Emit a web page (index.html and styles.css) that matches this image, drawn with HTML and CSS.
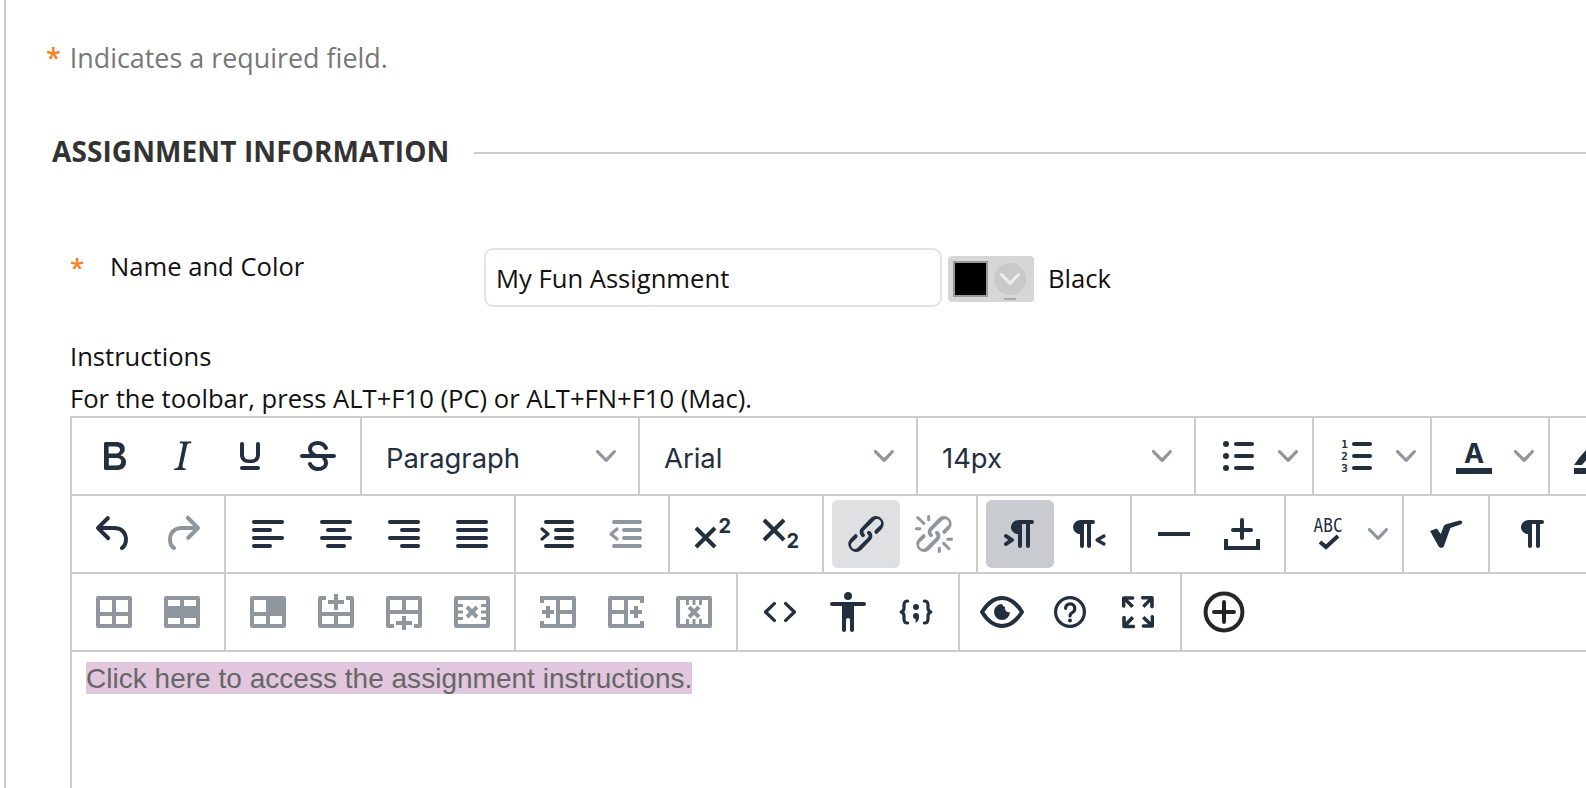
FILE: index.html
```html
<!DOCTYPE html>
<html>
<head>
    <meta http-equiv="Content-Type" content="text/html; charset=utf-8" />
    <title>Create Assignment</title>
    <link rel="stylesheet" href="styles.css">
</head>
<body>
<div class="page">
    <p class="note"><span class="star star-note">*</span> Indicates a required field.</p>

    <div class="sec-head"><h2>ASSIGNMENT INFORMATION</h2></div>

    <div class="name-row">
        <span class="star star-name">*</span>
        <label class="name-label">Name and Color</label>
        <div class="name-input">My Fun Assignment</div>
        <div class="swatch">
            <span class="swatch-box"></span>
            <span class="swatch-arrow">
                <svg viewBox="0 0 10 10" width="20" height="20"><path d="M8.7 2.2c.3-.3.8-.3 1 0 .4.4.4.9 0 1.2L5.7 7.8c-.3.3-.9.3-1.2 0L.2 3.4a.8.8 0 0 1 0-1.2c.3-.3.8-.3 1.1 0L5 6l3.7-3.8z"/></svg>
            </span>
            <span class="swatch-mark"></span>
        </div>
        <span class="color-name">Black</span>
    </div>

    <div class="instr">Instructions</div>
    <div class="help">For the toolbar, press ALT+F10 (PC) or ALT+FN+F10 (Mac).</div>

    <div class="editor">
        <!-- row 1 -->
        <div class="tb-row">
            <div class="group">
                <span class="btn"><svg class="ic" viewBox="0 0 24 24"><path d="M7.8 19c-.3 0-.5 0-.6-.2l-.2-.5V5.7c0-.2 0-.4.2-.5l.6-.2h5c1.5 0 2.7.3 3.5 1 .7.6 1.1 1.4 1.1 2.5a3 3 0 0 1-.6 1.9c-.4.6-1 1-1.6 1.2.4.1.9.3 1.3.6s.8.7 1 1.2c.4.4.5 1 .5 1.6 0 1.3-.4 2.3-1.3 3-.8.7-2.1 1-3.8 1H7.8zm5-8.3c.6 0 1.2-.1 1.6-.5.4-.3.6-.7.6-1.3 0-1.1-.8-1.7-2.3-1.7H9.3v3.5h3.4zm.5 6c.7 0 1.3-.1 1.7-.4.4-.4.6-.9.6-1.5s-.2-1-.7-1.4c-.4-.3-1-.4-2-.4H9.4v3.8h4z"/></svg></span>
                <span class="btn"><svg class="ic" viewBox="0 0 24 24"><path d="M16.7 4.7l-.1.9h-.3c-.6 0-1 0-1.4.3-.3.3-.4.6-.5 1.1l-2.1 9.8v.6c0 .5.4.8 1.4.8h.2l-.2.8H8l.2-.8h.2c1.1 0 1.8-.5 2-1.5l2-9.8.1-.5c0-.6-.4-.8-1.4-.8h-.3l.2-.9h5.8z"/></svg></span>
                <span class="btn"><svg class="ic" viewBox="0 0 24 24"><path d="M16 5c.6 0 1 .4 1 1v5.5a4 4 0 0 1-.4 1.8l-.6 1c-.7.6-1.7 1.2-3 1.2h-2c-1.3 0-2.3-.6-3-1.2l-.6-1a4 4 0 0 1-.4-1.8V6c0-.6.4-1 1-1s1 .4 1 1v5.5c0 .3 0 .6.2 1l.4.6c.3.3.8.6 1.4.6h2c.6 0 1.1-.3 1.4-.6l.4-.6c.2-.4.2-.7.2-1V6c0-.6.4-1 1-1zM8 17h8c.6 0 1 .4 1 1s-.4 1-1 1H8a1 1 0 0 1 0-2z"/></svg></span>
                <span class="btn"><svg class="ic" viewBox="0 0 24 24"><path class="ln" d="M4 12h16M16 8c-.8-1.6-2.200-2.500-4-2.500-2.300 0-4 1.200-4 3 0 1.500 1 2.500 3 3.500M8 16c.8 1.600 2.200 2.500 4 2.500 2.300 0 4-1.200 4-3 0-1-.4-1.800-1-2.500"/></svg></span>
            </div>
            <div class="select select-text"><span>Paragraph</span><svg class="chev" viewBox="0 0 10 10"><path d="M8.7 2.2c.3-.3.8-.3 1 0 .4.4.4.9 0 1.2L5.7 7.8c-.3.3-.9.3-1.2 0L.2 3.400a.8.8 0 0 1 0-1.200c.3-.3.8-.3 1.100 0L5 6l3.700-3.800z"/></svg></div>
            <div class="select select-text"><span>Arial</span><svg class="chev" viewBox="0 0 10 10"><path d="M8.7 2.2c.3-.3.8-.3 1 0 .4.4.4.9 0 1.2L5.7 7.8c-.3.3-.9.3-1.2 0L.2 3.400a.8.8 0 0 1 0-1.200c.3-.3.8-.3 1.100 0L5 6l3.700-3.800z"/></svg></div>
            <div class="select select-text"><span>14px</span><svg class="chev" viewBox="0 0 10 10"><path d="M8.7 2.2c.3-.3.8-.3 1 0 .4.4.4.9 0 1.2L5.7 7.8c-.3.3-.9.3-1.2 0L.2 3.400a.8.8 0 0 1 0-1.200c.3-.3.8-.3 1.100 0L5 6l3.700-3.800z"/></svg></div>
            <div class="select split">
                <svg class="ic" viewBox="0 0 24 24"><path class="ln" d="M11 6h8M11 12h8M11 18h8"/><circle cx="6" cy="6" r="1.500"/><circle cx="6" cy="12" r="1.500"/><circle cx="6" cy="18" r="1.500"/></svg>
                <svg class="chev" viewBox="0 0 10 10"><path d="M8.7 2.2c.3-.3.8-.3 1 0 .4.4.4.9 0 1.2L5.700 7.800c-.3.3-.9.3-1.200 0L.2 3.400a.8.8 0 0 1 0-1.200c.3-.3.8-.3 1.100 0L5 6l3.700-3.800z"/></svg>
            </div>
            <div class="select split">
                <svg class="ic" viewBox="0 0 24 24"><path class="ln" d="M11 6h8M11 12h8M11 18h8"/><text class="num" x="4.600" y="8.200">1</text><text class="num" x="4.600" y="14.200">2</text><text class="num" x="4.600" y="20.200">3</text></svg>
                <svg class="chev" viewBox="0 0 10 10"><path d="M8.7 2.2c.3-.3.8-.3 1 0 .4.4.4.9 0 1.2L5.700 7.800c-.3.3-.9.3-1.200 0L.2 3.400a.8.8 0 0 1 0-1.200c.3-.3.8-.3 1.100 0L5 6l3.700-3.800z"/></svg>
            </div>
            <div class="select split">
                <svg class="ic" viewBox="0 0 24 24"><text class="big-a" x="12" y="15.700">A</text><path d="M3 18h18v3H3z"/></svg>
                <svg class="chev" viewBox="0 0 10 10"><path d="M8.7 2.2c.3-.3.8-.3 1 0 .4.4.4.9 0 1.2L5.700 7.800c-.3.3-.9.3-1.200 0L.2 3.400a.8.8 0 0 1 0-1.200c.3-.3.8-.3 1.100 0L5 6l3.700-3.800z"/></svg>
            </div>
            <div class="select split">
                <svg class="ic" viewBox="0 0 24 24"><path d="M3 18h18v3H3zM3 16.500L5.500 13 9 9l.1 5L7 16.500z"/></svg>
            </div>
        </div>
        <!-- row 2 -->
        <div class="tb-row">
            <div class="group">
                <span class="btn"><svg class="ic" viewBox="0 0 24 24"><path d="M6.400 8H12c3.700 0 6.200 2 6.800 5.100.6 2.700-.4 5.600-2.300 6.800a1 1 0 0 1-1-1.800c1.100-.7 1.800-2.700 1.400-4.600-.5-2.100-2.100-3.500-4.900-3.500H6.400l3.300 3.300a1 1 0 1 1-1.400 1.400l-5-5a1 1 0 0 1 0-1.400l5-5a1 1 0 0 1 1.400 1.400L6.400 8z"/></svg></span>
                <span class="btn off"><svg class="ic" viewBox="0 0 24 24"><path d="M17.600 10H12c-2.800 0-4.400 1.400-4.900 3.500-.4 2 .3 3.900 1.400 4.600a1 1 0 1 1-1 1.800c-2-1.200-2.900-4.100-2.300-6.800.6-3 3-5.100 6.800-5.100h5.600l-3.300-3.300a1 1 0 1 1 1.400-1.400l5 5a1 1 0 0 1 0 1.400l-5 5a1 1 0 0 1-1.400-1.400l3.300-3.300z"/></svg></span>
            </div>
            <div class="group">
                <span class="btn"><svg class="ic" viewBox="0 0 24 24"><path class="ln" d="M5 6h14M5 10h8M5 14h14M5 18h8"/></svg></span>
                <span class="btn"><svg class="ic" viewBox="0 0 24 24"><path class="ln" d="M5 6h14M8 10h8M5 14h14M8 18h8"/></svg></span>
                <span class="btn"><svg class="ic" viewBox="0 0 24 24"><path class="ln" d="M5 6h14M11 10h8M5 14h14M11 18h8"/></svg></span>
                <span class="btn"><svg class="ic" viewBox="0 0 24 24"><path class="ln" d="M5 6h14M5 10h14M5 14h14M5 18h14"/></svg></span>
            </div>
            <div class="group">
                <span class="btn"><svg class="ic" viewBox="0 0 24 24"><path class="ln" d="M6 6h13M11 10h8M11 14h8M6 18h13"/><path class="ln thin" d="M4 9.500L7 12l-3 2.500"/></svg></span>
                <span class="btn off"><svg class="ic" viewBox="0 0 24 24"><path class="ln" d="M6 6h13M11 10h8M11 14h8M6 18h13"/><path class="ln thin" d="M7.500 9.500L4.500 12l3 2.500"/></svg></span>
            </div>
            <div class="group">
                <span class="btn"><svg class="ic" viewBox="0 0 24 24"><path class="ln sq" d="M4 9l9.500 9.500M13.500 9L4 18.500"/><text class="idx" x="15.300" y="11.700">2</text></svg></span>
                <span class="btn"><svg class="ic" viewBox="0 0 24 24"><path class="ln sq" d="M4 5l10 10M14 5L4 15"/><text class="idx" x="15.300" y="19">2</text></svg></span>
            </div>
            <div class="group">
                <span class="btn on-light"><svg class="ic" viewBox="0 0 24 24"><path d="M6.200 12.300a1 1 0 0 1 1.400 1.400l-2 2a2 2 0 1 0 2.600 2.800l4.800-4.800a1 1 0 0 0 0-1.400 1 1 0 1 1 1.400-1.300 2.900 2.900 0 0 1 0 4L9.600 20a3.900 3.900 0 0 1-5.500-5.500l2-2zm11.600-.6a1 1 0 0 1-1.400-1.400l2-2a2 2 0 1 0-2.600-2.800L11 10.300a1 1 0 0 0 0 1.400A1 1 0 1 1 9.600 13a2.900 2.900 0 0 1 0-4L14.400 4a3.900 3.900 0 0 1 5.500 5.500l-2 2z"/></svg></span>
                <span class="btn off"><svg class="ic" viewBox="0 0 24 24"><path d="M6.200 12.300a1 1 0 0 1 1.400 1.400l-2.100 2a2 2 0 1 0 2.700 2.800l4.800-4.800a1 1 0 0 0 0-1.400 1 1 0 1 1 1.400-1.300 2.900 2.900 0 0 1 0 4L9.600 20a3.900 3.900 0 0 1-5.500-5.500l2-2zm11.600-.6a1 1 0 0 1-1.400-1.400l2.100-2a2 2 0 1 0-2.700-2.800L11 10.300a1 1 0 0 0 0 1.400A1 1 0 1 1 9.600 13a2.900 2.900 0 0 1 0-4L14.400 4a3.900 3.900 0 0 1 5.500 5.500l-2 2zM7.600 6.300a.8.8 0 0 1-1 1.100L3.300 4.200a.7.7 0 1 1 1-1l3.200 3.100zM5.100 8.600a.8.8 0 0 1 0 1.500H3a.8.8 0 0 1 0-1.500H5zm5-3.500a.8.8 0 0 1-1.500 0V3a.8.8 0 0 1 1.500 0v2zm6 11.800a.8.8 0 0 1 1-1l3.200 3.200a.8.8 0 0 1-1 1L16 17zm-2.200 2a.8.8 0 0 1 1.500 0V21a.8.8 0 0 1-1.500 0V19zm5-3.500a.7.7 0 1 1 0-1.500H21a.8.8 0 0 1 0 1.500H19z"/></svg></span>
            </div>
            <div class="group">
                <span class="btn on-dark"><svg class="ic" viewBox="0 0 24 24"><path d="M11 5h7a1 1 0 0 1 0 2h-1v11a1 1 0 0 1-2 0V7h-2v11a1 1 0 0 1-2 0v-6c-.5 0-1 0-1.400-.3A3.400 3.400 0 0 1 7.800 10a3.300 3.300 0 0 1 0-2.800 3.400 3.400 0 0 1 1.800-1.800L11 5zM4.400 16.200L6.200 15l-1.800-1.200a1 1 0 0 1 1.200-1.600l3 2a1 1 0 0 1 0 1.600l-3 2a1 1 0 1 1-1.200-1.600z"/></svg></span>
                <span class="btn"><svg class="ic" viewBox="0 0 24 24"><path d="M8 5h6.500a1 1 0 0 1 0 2h-1v11a1 1 0 0 1-2 0V7H10v11a1 1 0 0 1-2 0v-6c-.5 0-1 0-1.400-.3A3.400 3.400 0 0 1 4.800 10a3.300 3.300 0 0 1 0-2.800 3.400 3.400 0 0 1 1.800-1.800L8 5z"/><path class="ln thin" d="M20 13l-3.500 2 3.500 2"/></svg></span>
            </div>
            <div class="group">
                <span class="btn"><svg class="ic" viewBox="0 0 24 24"><path d="M4 11h16v2H4z"/></svg></span>
                <span class="btn"><svg class="ic" viewBox="0 0 24 24"><path class="ln" d="M12 5v9M7.500 10h9"/><path class="ln sq" d="M4 14.500V19h16v-4.500"/></svg></span>
            </div>
            <div class="select split">
                <svg class="ic" viewBox="0 0 24 24"><text class="abc" x="4.800" y="10.800" textLength="14.500" lengthAdjust="spacingAndGlyphs">ABC</text><path class="ln sq" d="M8 16l3 2.500 6-5.500"/></svg>
                <svg class="chev" viewBox="0 0 10 10"><path d="M8.7 2.2c.3-.3.8-.3 1 0 .4.4.4.9 0 1.2L5.700 7.800c-.3.3-.9.3-1.200 0L.2 3.400a.8.8 0 0 1 0-1.200c.3-.3.8-.3 1.100 0L5 6l3.700-3.800z"/></svg>
            </div>
            <div class="group">
                <span class="btn"><svg class="ic" viewBox="0 0 24 24"><path d="M4 10.500l3.400-1.300 2 2.800 1.300-3.500c.4-1 .8-1.300 1.800-1.500l6.300-1.700c1.400-.2 1.800 1.600.4 2L14.200 9 11 18c-.5 1.200-2.200 1.200-2.800 0z"/></svg></span>
            </div>
            <div class="group">
                <span class="btn"><svg class="ic" viewBox="0 0 24 24"><path d="M10 5h7a1 1 0 0 1 0 2h-1v11a1 1 0 0 1-2 0V7h-2v11a1 1 0 0 1-2 0v-6c-.5 0-1 0-1.400-.3A3.400 3.400 0 0 1 6.800 10a3.300 3.300 0 0 1 0-2.800 3.400 3.400 0 0 1 1.800-1.800L10 5z"/></svg></span>
            </div>
        </div>
        <!-- row 3 -->
        <div class="tb-row">
            <div class="group">
                <span class="btn off"><svg class="ic" viewBox="0 0 24 24"><path fill-rule="evenodd" d="M4 4h16a1 1 0 0 1 1 1v14a1 1 0 0 1-1 1H4a1 1 0 0 1-1-1V5a1 1 0 0 1 1-1zm1 2v6h6V6zm8 0v6h6V6zm-8 8v4h6v-4zm8 0v4h6v-4z"/></svg></span>
                <span class="btn off"><svg class="ic" viewBox="0 0 24 24"><path fill-rule="evenodd" d="M4 4h16a1 1 0 0 1 1 1v14a1 1 0 0 1-1 1H4a1 1 0 0 1-1-1V5a1 1 0 0 1 1-1zm1 2v3h6V6zm8 0v3h6V6zm-8 9v3h6v-3zm8 0v3h6v-3z"/></svg></span>
            </div>
            <div class="group">
                <span class="btn off"><svg class="ic" viewBox="0 0 24 24"><path fill-rule="evenodd" d="M4 4h16a1 1 0 0 1 1 1v14a1 1 0 0 1-1 1H4a1 1 0 0 1-1-1V5a1 1 0 0 1 1-1zm1 2v6h6V6zm0 8v4h6v-4zm8 0v4h6v-4z"/></svg></span>
                <span class="btn off"><svg class="ic" viewBox="0 0 24 24"><path fill-rule="evenodd" d="M3 5a1 1 0 0 1 1-1h3v2H5v6h14V6h-2V4h3a1 1 0 0 1 1 1v14a1 1 0 0 1-1 1H4a1 1 0 0 1-1-1zm2 9v4h6v-4zm8 0v4h6v-4z"/><path d="M11 3h2v3h3v2h-3v3h-2V8H8V6h3z"/></svg></span>
                <span class="btn off"><svg class="ic" viewBox="0 0 24 24"><path fill-rule="evenodd" d="M4 4h16a1 1 0 0 1 1 1v14a1 1 0 0 1-1 1h-3v-2h2v-5H5v5h2v2H4a1 1 0 0 1-1-1V5a1 1 0 0 1 1-1zm1 2v5h6V6zm8 0v5h6V6z"/><path d="M11 14h2v2.500h3v2h-3V21h-2v-2.500H8v-2h3z"/></svg></span>
                <span class="btn off"><svg class="ic" viewBox="0 0 24 24"><path fill-rule="evenodd" d="M4 4h16a1 1 0 0 1 1 1v14a1 1 0 0 1-1 1H4a1 1 0 0 1-1-1V5a1 1 0 0 1 1-1zm1 2v12h14V6z"/><path d="M5 8h2.500v1.500H5zM5 11.250h2.500v1.500H5zM5 14.500h2.500V16H5zM16.500 8H19v1.500h-2.500zM16.500 11.250H19v1.500h-2.500zM16.500 14.500H19V16h-2.500z"/><path class="ln sq" d="M9.500 9.500l5 5M14.500 9.500l-5 5"/></svg></span>
            </div>
            <div class="group">
                <span class="btn off"><svg class="ic" viewBox="0 0 24 24"><path fill-rule="evenodd" d="M3 4h17a1 1 0 0 1 1 1v14a1 1 0 0 1-1 1H3v-2h8V6H3zm10 2v5h6V6zm0 7v5h6v-5z"/><path d="M6 9h2v2h2v2H8v2H6v-2H4v-2h2zM3 4h2v3.500H3zM3 16.500h2V20H3z"/></svg></span>
                <span class="btn off"><svg class="ic" viewBox="0 0 24 24"><path fill-rule="evenodd" d="M21 4H4a1 1 0 0 0-1 1v14a1 1 0 0 0 1 1h17v-2h-8V6h8zM5 6v5h6V6zm0 7v5h6v-5z"/><path d="M16 9h2v2h2v2h-2v2h-2v-2h-2v-2h2zM19 4h2v3.500h-2zM19 16.500h2V20h-2z"/></svg></span>
                <span class="btn off"><svg class="ic" viewBox="0 0 24 24"><path fill-rule="evenodd" d="M4 4h16a1 1 0 0 1 1 1v14a1 1 0 0 1-1 1H4a1 1 0 0 1-1-1V5a1 1 0 0 1 1-1zm1 2v12h14V6z"/><path d="M8 6h1.500v2.500H8zM11.250 6h1.500v2.500h-1.500zM14.500 6H16v2.500h-1.500zM8 15.500h1.500V18H8zM11.250 15.500h1.500V18h-1.500zM14.500 15.500H16V18h-1.500z"/><path class="ln sq" d="M9.500 9.500l5 5M14.500 9.500l-5 5"/></svg></span>
            </div>
            <div class="group">
                <span class="btn"><svg class="ic" viewBox="0 0 24 24"><path d="M9.800 15.700c.3.3.3.8 0 1-.3.4-.9.4-1.200 0l-4.400-4.100a.8.8 0 0 1 0-1.200l4.400-4.200c.3-.3.9-.3 1.200 0 .3.3.3.8 0 1.100L6 12l3.800 3.700zM14.200 15.700c-.3.3-.3.8 0 1 .4.4.9.4 1.200 0l4.400-4.100c.3-.3.3-.9 0-1.200l-4.400-4.200a.8.8 0 0 0-1.200 0c-.3.3-.3.8 0 1.100L18 12l-3.800 3.700z"/></svg></span>
                <span class="btn"><svg class="ic" viewBox="0 0 24 24"><path d="M12 2a2 2 0 0 1 2 2 2 2 0 0 1-2 2 2 2 0 0 1-2-2c0-1.100.9-2 2-2zm8 7h-5v12c0 .6-.4 1-1 1a1 1 0 0 1-1-1v-5c0-.6-.4-1-1-1a1 1 0 0 0-1 1v5c0 .6-.4 1-1 1a1 1 0 0 1-1-1V9H4a1 1 0 1 1 0-2h16c.6 0 1 .4 1 1s-.4 1-1 1z"/></svg></span>
                <span class="btn"><svg class="ic" viewBox="0 0 24 24"><path class="ln thin" d="M7.800 6.500C6.300 6.500 6 7.200 6 8.500V10c0 1-.5 1.700-1.400 2 .9.300 1.400 1 1.400 2v1.500c0 1.300.3 2 1.800 2M16.200 6.500c1.500 0 1.800.7 1.800 2V10c0 1 .5 1.700 1.400 2-.9.300-1.400 1-1.400 2v1.500c0 1.300-.3 2-1.800 2"/><circle cx="12" cy="9.500" r="1.500"/><circle cx="12" cy="14" r="1.500"/><path d="M11.800 15.500l1.700-1c0 1.300-.5 2.300-1.700 3z"/></svg></span>
            </div>
            <div class="group">
                <span class="btn"><svg class="ic" viewBox="0 0 24 24"><path class="ln" d="M2 12c3-4.800 6.500-7 10-7s7 2.200 10 7c-3 4.800-6.500 7-10 7s-7-2.200-10-7z"/><path fill-rule="evenodd" d="M12 8a4 4 0 1 0 4 4 2 2 0 0 1-2.500-2.500A2 2 0 0 1 12 8z"/></svg></span>
                <span class="btn"><svg class="ic" viewBox="0 0 24 24"><circle class="ln thin" cx="12" cy="12" r="7.200"/><path class="ln thin" d="M9.800 10.200a2.300 2.300 0 1 1 3.500 2c-.9.500-1.300 1-1.300 1.800"/><circle cx="12" cy="16.300" r="1"/></svg></span>
                <span class="btn"><svg class="ic" viewBox="0 0 24 24"><path d="M15.300 10l-1.200-1.300 2.900-3h-2.300a.9.9 0 1 1 0-1.700H19c.5 0 .9.4.9.9v4.400a.9.9 0 1 1-1.800 0V7l-2.900 3zm0 4l3 3v-2.300a.9.9 0 1 1 1.700 0V19c0 .5-.4.9-.9.9h-4.400a.9.9 0 1 1 0-1.800H17l-3-2.900 1.300-1.200zM10 15.400l-2.900 3h2.300a.9.9 0 1 1 0 1.700H5a.9.9 0 0 1-.9-.9v-4.400a.9.9 0 1 1 1.800 0V17l2.900-3 1.200 1.300zM8.700 10L5.700 7v2.300a.9.9 0 0 1-1.700 0V5c0-.5.4-.9.9-.9h4.400a.9.9 0 0 1 0 1.800H7l3 2.900-1.300 1.200z"/></svg></span>
            </div>
            <div class="group">
                <span class="btn plus"><svg class="ic" viewBox="0 0 24 24"><circle class="ln" cx="12" cy="12" r="9.200"/><path class="ln" d="M7 12h10M12 7v10"/></svg></span>
            </div>
        </div>
        <div class="content">
            <span class="placeholder">Click here to access the assignment instructions.</span>
        </div>
    </div>
</div>
</body>
</html>
```

FILE: styles.css
```css
*{ margin: 0; padding: 0; box-sizing: border-box;}
html, body{ height: 100%; background: #fff;}
body{ overflow: hidden; font-family: "Open Sans", "Liberation Sans", sans-serif; color: #111;}

.page{ margin-left: 4px; height: 788px; border-left: 2px solid #ccc;}

.note{ padding: 40px 0 0 40px; font-size: 26.9px; line-height: 36px; color: #777;}
.star{ color: #f7821e; font-weight: 600;}
.star-note{ margin-right: 2px;}

.sec-head{ display: flex; align-items: center; margin-top: 56px; padding-left: 46px; height: 40px;}
.sec-head h2{ font-size: 28px; line-height: 38px; margin-bottom: 2px; font-weight: 700; color: #333; white-space: nowrap; letter-spacing: .1px;}
.sec-head::after{ content: ""; flex: 1; height: 2px; margin: 2px 0 0 25px; background: #ccc;}

.name-row{ display: flex; align-items: flex-start; margin-top: 76px; padding-left: 64px; height: 59px;}
.star-name{ width: 40px; font-size: 26px; line-height: 38px;}
.name-label{ width: 374px; font-size: 25.6px; line-height: 38px;}
.name-input{ width: 458px; height: 59px; padding-left: 10px; border: 2px solid #e4e4e4; border-radius: 9px; font-size: 25.6px; line-height: 57px;}
.swatch{ position: relative; display: flex; align-items: center; width: 86px; height: 46px; margin: 8px 14px 0 6px; padding-left: 5px; background: #d6d6d6; border-radius: 4px;}
.swatch-box{ width: 35px; height: 36px; background: #000; border: 2px solid #999;}
.swatch-arrow{ display: flex; align-items: center; justify-content: center; width: 32px; height: 32px; margin-left: 6px; border-radius: 50%; background: #c9c9c9;}
.swatch-arrow svg{ fill: #eee;}
.swatch-mark{ position: absolute; left: 56px; bottom: 2px; width: 12px; height: 2px; background: #aaa;}
.color-name{ font-size: 25.6px; line-height: 62px;}

.instr{ margin-top: 30px; padding-left: 64px; font-size: 25.6px; line-height: 40px;}
.help{ height: 39px; padding: 3px 0 0 64px; font-size: 25.6px; line-height: 38px; white-space: nowrap;}

.editor{ width: 1700px; height: 400px; margin-left: 64px; border-left: 2px solid #ccc; border-top: 2px solid #ccc;}
.tb-row{ display: flex; height: 78px; border-bottom: 2px solid #ccc; color: #222f3e;}
.group{ display: flex; padding: 4px 8px; border-right: 2px solid #ccc;}
.group:last-child{ border-right: 0;}
.btn{ display: flex; align-items: center; justify-content: center; width: 68px; height: 68px; border-radius: 6px;}
.btn.off{ color: #90969e;}
.btn.plus{ color: #262626;}
.btn.on-light{ background: #dee0e2;}
.btn.on-dark{ background: #c8cbcf;}

.select{ display: flex; align-items: center; justify-content: space-between; border-right: 2px solid #ccc;}
.select-text{ width: 278px; padding: 0 22px 0 24px; font-family: Inter, "Noto Sans", sans-serif; font-size: 27.4px;}
.select-text span{ padding-top: 4px;}
.split{ width: 118px; padding: 0 14px 0 18px;}
.split:last-child{ border-right: 0;}

.ic{ display: block; flex: none; width: 48px; height: 48px; fill: currentColor;}
.ic .ln{ fill: none; stroke: currentColor; stroke-width: 2; stroke-linecap: round; stroke-linejoin: round;}
.ic .ln.sq{ stroke-linecap: butt; stroke-linejoin: miter;}
.ic .ln.thin{ stroke-width: 1.6;}
.ic .num{ font-family: "DejaVu Sans Mono", monospace; font-size: 5.5px; font-weight: 700;}
.ic .idx{ font-family: Inter, sans-serif; font-size: 10px; font-weight: 700;}
.ic .big-a{ font-family: Inter, sans-serif; font-size: 13.5px; font-weight: 700; text-anchor: middle;}
.ic .abc{ font-family: "DejaVu Sans Mono", monospace; font-size: 9.5px;}
.chev{ display: block; flex: none; width: 20px; height: 20px; fill: #90969e;}

.content{ padding: 10px 14px;}
.placeholder{ display: inline-block; height: 32px; font-family: "Liberation Sans", Arial, sans-serif; font-size: 28px; line-height: 34px; letter-spacing: .02px; color: #666; background: #e1c6de;}
```
